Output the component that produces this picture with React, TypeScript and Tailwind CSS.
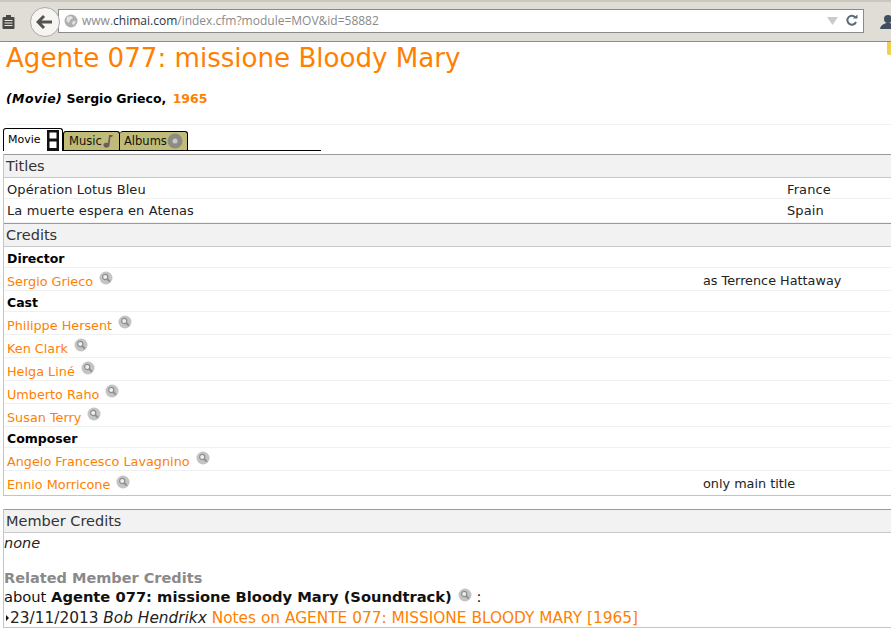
const font = "font-['DejaVu_Sans',sans-serif]";

function SearchIcon() {
  return (
    <svg width="14" height="14" viewBox="0 0 14 14" className="ml-[6px] -mt-[5px] shrink-0">
      <circle cx="7" cy="7" r="6.5" fill="#c4c4c4" />
      <circle cx="6.2" cy="6" r="2.6" fill="#eeeeee" stroke="#8f8f8f" strokeWidth="1.2" />
      <path d="M8.2 8 L10.8 10.6" stroke="#8f8f8f" strokeWidth="1.8" />
    </svg>
  );
}

function SectionHeader({ title }: { title: string }) {
  return (
    <div className="h-[24px] border-t border-t-[#9a9a9a] border-b border-b-[#c8c8c8] bg-[#f2f2f2] pl-[2px] text-[14.5px] leading-[23px] text-[#333]">
      {title}
    </div>
  );
}

function TitleRow({ name, country, h }: { name: string; country: string; h: string }) {
  return (
    <div className={`flex items-center border-b border-[#f0f0f0] pl-[3px] text-[13px] tracking-[0.1px] text-[#222] ${h}`}>
      <span className="w-[780px] shrink-0">{name}</span>
      <span>{country}</span>
    </div>
  );
}

function RoleRow({ role }: { role: string }) {
  return (
    <div className="flex h-[21px] items-center border-b border-[#f0f0f0] pl-[3px] pt-[4px] text-[12.5px] font-bold text-black">
      {role}
    </div>
  );
}

function PersonRow({ name, note, last }: { name: string; note?: string; last?: boolean }) {
  return (
    <div className={`flex h-[23px] items-center pl-[3px] pt-[3px] text-[12.8px] ${last ? "" : "border-b border-[#f0f0f0]"}`}>
      <div className="flex w-[696px] shrink-0 items-center text-[#ff8000]">
        <span className="pt-[2px]">{name}</span>
        <SearchIcon />
      </div>
      <span className="text-[#222]">{note}</span>
    </div>
  );
}

function BrowserBar() {
  return (
    <div className="relative flex h-[42px] items-center overflow-hidden border-b border-[#8c8c8c] border-t-2 border-t-[#c9c7c0] bg-[#e0ddd6]">
      <div className="absolute left-0 top-[-2px] h-[1px] w-[595px] bg-[#1d3a66]" />
      <div className="absolute right-0 top-[-2px] h-[2px] w-[66px] bg-[#1d3a66]" />
      <svg width="16" height="16" viewBox="0 0 16 16" className="ml-[1px] shrink-0">
        <rect x="1.5" y="3" width="12" height="12" rx="1" fill="#4a4a44" />
        <rect x="5" y="1" width="5" height="3" fill="#4a4a44" />
        <path d="M3.5 6.5h8M3.5 9h8M3.5 11.5h8" stroke="#e8e6e0" strokeWidth="1" />
      </svg>
      <div className="z-10 ml-[13px] flex h-[30px] w-[30px] shrink-0 items-center justify-center rounded-full border border-[#a9a9a9] bg-[#f6f5f2]">
        <svg width="18" height="16" viewBox="0 0 18 16">
          <path d="M8 2 L2 8 L8 14 M3 8 H16" fill="none" stroke="#55524c" strokeWidth="3" />
        </svg>
      </div>
      <div className="-mt-[2px] -ml-[2px] flex h-[24px] flex-1 items-center border border-[#8a8a8a] bg-white pl-[5px] pr-[5px]">
        <svg width="14" height="14" viewBox="0 0 14 14" className="shrink-0">
          <circle cx="7" cy="7" r="6.5" fill="#b0b0b0" />
          <path d="M3 3 L7 2 L9 4 L6 6 L5 9 L2.5 7 Z M9 7 L12 7 L10 11 L8 10 Z" fill="#e4e4e4" />
        </svg>
        <span className="ml-[4px] font-['Open_Sans',sans-serif] text-[12px] text-[#8a8a8a]">
          www.<span className="text-[#333]">chimai.com</span>/index.cfm?module=MOV&amp;id=58882
        </span>
        <svg width="11" height="8" viewBox="0 0 11 8" className="ml-auto shrink-0">
          <path d="M0 0 H11 L5.5 8 Z" fill="#c8ccd0" />
        </svg>
        <svg width="13" height="13" viewBox="0 0 13 13" className="ml-[7px] shrink-0">
          <path d="M10.5 3.5 A4.5 4.5 0 1 0 11 8" fill="none" stroke="#5c6a76" strokeWidth="2" />
          <path d="M8 4.5 H12.5 V0.5 Z" fill="#5c6a76" />
        </svg>
      </div>
      <svg width="16" height="16" viewBox="0 0 16 16" className="ml-[15px] -mr-[4px] shrink-0">
        <circle cx="9" cy="5" r="4" fill="#3f4f60" />
        <path d="M1 15 C2 10 6 10 7 9 H11 C12 10 16 10 17 15 Z" fill="#3f4f60" />
      </svg>
    </div>
  );
}

function Tabs() {
  return (
    <div className="ml-[3px] flex h-[23px] w-[318px] items-end border-b border-black text-[11.5px]">
      <div className="relative -mb-px flex h-[23px] w-[60px] items-center rounded-t-[3px] border-x border-t border-black bg-white pl-[4px]">
        <span className="mt-[1px] text-[11px]">Movie</span>
        <svg width="12" height="21" viewBox="0 0 12 21" className="absolute left-[43px] top-[1px]">
          <path d="M0 0h2.5v21H0zM9.5 0H12v21H9.5zM0 0h12v2.5H0zM0 8.5h12v3H0zM0 18h12v3H0z" fill="#111" />
        </svg>
      </div>
      <div className="flex h-[19px] w-[57px] items-center rounded-t-[3px] border-x border-t border-black bg-[#c0bc78] pl-[5px] text-[#111]">
        <span className="mt-[1px]">Music</span>
        <svg width="12" height="14" viewBox="0 0 12 14" className="shrink-0">
          <path d="M7 1 H11 L10 3 H8.5 L7.5 11 A3 2.5 0 1 1 6 9 Z" fill="#6e5b5e" />
        </svg>
      </div>
      <div className="flex h-[19px] w-[68px] items-center rounded-t-[3px] border-r border-t border-black bg-[#c0bc78] pl-[4px] text-[#111]">
        <span className="mt-[1px]">Albums</span>
        <svg width="16" height="16" viewBox="0 0 16 16" className="shrink-0">
          <circle cx="8" cy="8" r="7.5" fill="#8c8c84" />
          <circle cx="8" cy="8" r="2.5" fill="#c9c9c0" />
        </svg>
      </div>
    </div>
  );
}

export default function App() {
  return (
    <div className={`h-[628px] w-[891px] overflow-hidden bg-white ${font}`}>
      <BrowserBar />
      <div className="relative pl-[6px]">
        <div className="absolute right-0 top-0 h-[13px] w-[4px] rounded-bl-[2px] bg-[#f2cf50]" />
        <h1 className="h-[41px] text-[26.1px] leading-[32px] text-[#ff8000]">Agente 077: missione Bloody Mary</h1>
        <p className="h-[42px] border-b border-[#f2f2f2] pt-[8px] text-[12.5px] font-bold leading-[16px] text-black">
          <span className="italic tracking-[0.4px]">(Movie)</span> Sergio Grieco, <span className="ml-[2px] text-[#ff8000]">1965</span>
        </p>
      </div>
      <div className="mt-[3px]">
        <Tabs />
      </div>
      <div className="ml-[3px] mt-[3px] h-[342px] border-b border-l border-[#c4c4c4]">
        <SectionHeader title="Titles" />
        <TitleRow name="Opération Lotus Bleu" country="France" h="h-[21px] pt-[3px]" />
        <TitleRow name="La muerte espera en Atenas" country="Spain" h="h-[24px]" />
        <SectionHeader title="Credits" />
        <RoleRow role="Director" />
        <PersonRow name="Sergio Grieco" note="as Terrence Hattaway" />
        <RoleRow role="Cast" />
        <PersonRow name="Philippe Hersent" />
        <PersonRow name="Ken Clark" />
        <PersonRow name="Helga Liné" />
        <PersonRow name="Umberto Raho" />
        <PersonRow name="Susan Terry" />
        <RoleRow role="Composer" />
        <PersonRow name="Angelo Francesco Lavagnino" />
        <PersonRow name="Ennio Morricone" note="only main title" last />
      </div>
      <div className="ml-[3px] mt-[13px] h-[119px] border-b border-l border-[#c4c4c4]">
        <SectionHeader title="Member Credits" />
        <p className="h-[36px] text-[14.5px] italic leading-[20px] text-[#222]">none</p>
        <p className="h-[18px] text-[14.5px] font-bold leading-[18px] text-[#8a8a8a]">Related Member Credits</p>
        <p className="h-[20px] text-[14.7px] leading-[20px] text-[#111]">
          about <b>Agente 077: missione Bloody Mary (Soundtrack)</b>
          <SearchIconInline /> :
        </p>
        <div className="flex h-[21px] items-center whitespace-nowrap pt-px text-[15.35px] text-[#222]">
          <span className="ml-[2px] mr-px h-0 w-0 border-y-[3px] border-l-[3px] border-y-transparent border-l-[#111]" />
          23/11/2013&nbsp;<i>Bob Hendrikx</i>&nbsp;<span className="text-[#ff8000]">Notes on AGENTE 077: MISSIONE BLOODY MARY [1965]</span>
        </div>
      </div>
    </div>
  );
}

function SearchIconInline() {
  return (
    <span className="ml-[6px] inline-block align-[0px]">
      <svg width="14" height="14" viewBox="0 0 14 14">
        <circle cx="7" cy="7" r="6.5" fill="#c4c4c4" />
        <circle cx="6.2" cy="6" r="2.6" fill="#eeeeee" stroke="#8f8f8f" strokeWidth="1.2" />
        <path d="M8.2 8 L10.8 10.6" stroke="#8f8f8f" strokeWidth="1.8" />
      </svg>
    </span>
  );
}
